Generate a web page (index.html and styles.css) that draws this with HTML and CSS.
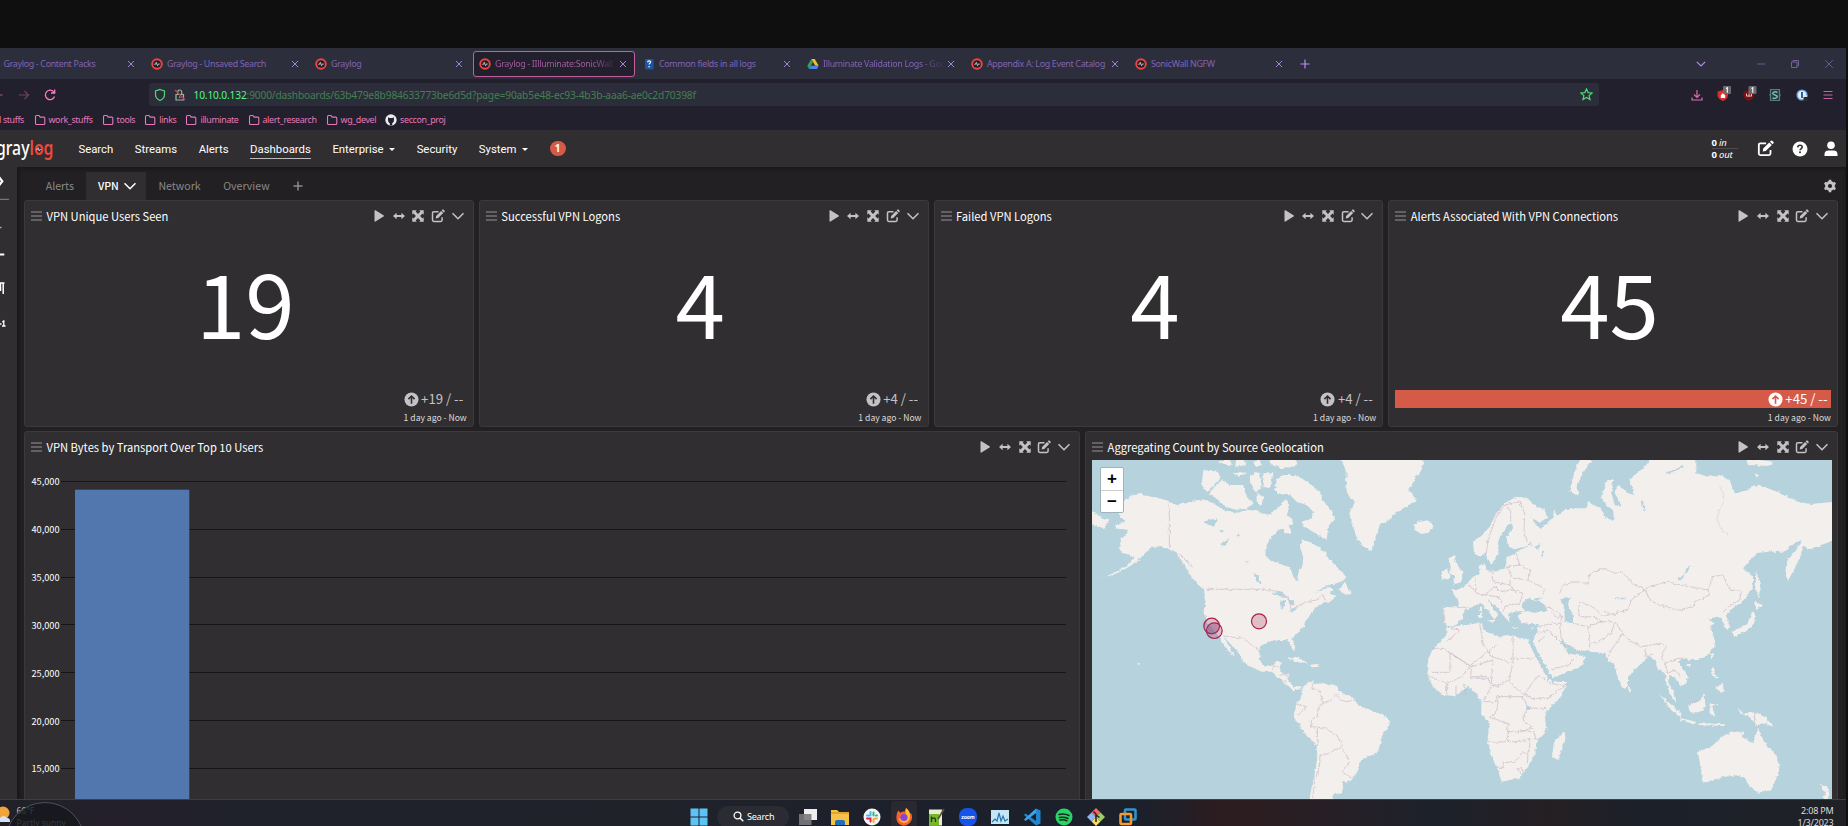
FILE: index.html
```html
<!DOCTYPE html>
<html lang="en">
<head>
<meta charset="utf-8">
<title>Graylog - Illuminate:SonicWall</title>
<link rel="stylesheet" href="styles.css">
</head>
<body>
<svg class="defs" width="0" height="0">
  <symbol id="fav" viewBox="0 0 12 12"><circle cx="6" cy="6" r="4.800" fill="#22202c" stroke="#f0443e" stroke-width="1.900"/><path d="M3.300 6.300h1.200l.8-2 1.200 3.400.8-1.700h1.400" fill="none" stroke="#cfcbd6" stroke-width=".9"/></symbol>
  <symbol id="x" viewBox="0 0 8 8"><path d="M1 1l6 6M7 1L1 7" fill="none" stroke="currentColor"/></symbol>
  <symbol id="folder" viewBox="0 0 12 12"><path d="M1.500 9.500v-7q0-1 1-1H5l1.200 1.600h3.600q1 0 1 1v5.400q0 1-1 1H2.500q-1 0-1-1z" fill="none" stroke="currentColor" stroke-width="1.100"/></symbol>
  <symbol id="grip" viewBox="0 0 11 10"><path d="M0 1h11M0 5h11M0 9h11" stroke="#757376" stroke-width="1.300"/></symbol>
  <symbol id="play" viewBox="0 0 14 14"><path d="M2.500 1.800q0-1 1-.5l8 4.900q1 .7 0 1.400l-8 4.900q-1 .5-1-.5z" fill="currentColor"/></symbol>
  <symbol id="wide" viewBox="0 0 14 14"><path d="M1 7l3.600-3.200v2.200h4.800V3.800L13 7l-3.600 3.200V8H4.600v2.200z" fill="currentColor"/></symbol>
  <symbol id="expand" viewBox="0 0 14 14"><path d="M1.300 5.800V1.300h4.500L4.600 2.500 7 4.900l2.400-2.400-1.200-1.200h4.500v4.500l-1.200-1.200L9.100 7l2.400 2.400 1.200-1.200v4.500H8.200l1.200-1.200L7 9.100l-2.400 2.400 1.200 1.200H1.300V8.200l1.200 1.200L4.900 7 2.500 4.600z" fill="currentColor"/></symbol>
  <symbol id="edit" viewBox="0 0 14 14"><path d="M7.500 2.800H2.800q-1.300 0-1.300 1.300v7q0 1.300 1.300 1.300h7q1.300 0 1.300-1.300V8.300" fill="none" stroke="currentColor" stroke-width="1.500"/><path d="M4.700 9.500l.4-2.500 5-5 2.100 2.100-5 5zM10.700 1.400l.8-.8q.5-.4 1 0l1.100 1.100q.4.500 0 1l-.8.8z" fill="currentColor"/></symbol>
  <symbol id="chev" viewBox="0 0 14 14"><path d="M2 4.700l5 5 5-5" fill="none" stroke="currentColor" stroke-width="1.600" stroke-linecap="round"/></symbol>
  <symbol id="up" viewBox="0 0 16 16"><circle cx="8" cy="8" r="7.500" fill="currentColor"/><path d="M8 12.500V4.500M4.700 7.600L8 4.300l3.300 3.300" fill="none" stroke="var(--hole)" stroke-width="1.700"/></symbol>
</svg>

<div class="top-strip"></div>
<header class="browser">
  <div class="tabs">
    <div class="tab first"><span class="tab-title">Graylog - Content Packs</span><svg class="close"><use href="#x"/></svg></div>
    <div class="tab"><svg class="fav"><use href="#fav"/></svg><span class="tab-title">Graylog - Unsaved Search</span><svg class="close"><use href="#x"/></svg></div>
    <div class="tab"><svg class="fav"><use href="#fav"/></svg><span class="tab-title">Graylog</span><svg class="close"><use href="#x"/></svg></div>
    <div class="tab active"><svg class="fav"><use href="#fav"/></svg><span class="tab-title fade">Graylog - IIlluminate:SonicWall</span><svg class="close"><use href="#x"/></svg></div>
    <div class="tab"><svg class="fav" viewBox="0 0 12 12"><rect x="2" y="1" width="8.500" height="10.500" rx="1" fill="#1f55a0"/><path d="M4.600 4.200q0-1.400 1.500-1.400t1.500 1.300q0 .8-.8 1.200-.7.400-.7 1.300" fill="none" stroke="#fff" stroke-width="1.200"/><circle cx="6.100" cy="8.700" r=".8" fill="#fff"/></svg><span class="tab-title">Common fields in all logs</span><svg class="close"><use href="#x"/></svg></div>
    <div class="tab"><svg class="fav" viewBox="0 0 12 12"><path d="M4.300 1h3.400l4 6.800H8.300z" fill="#f6bd28"/><path d="M4.300 1L.3 7.800 2 11l4-6.900z" fill="#35a25a"/><path d="M3.800 7.800h7.900L10 11H2z" fill="#4c84e8"/></svg><span class="tab-title fade">Illuminate Validation Logs - Goo</span><svg class="close"><use href="#x"/></svg></div>
    <div class="tab"><svg class="fav"><use href="#fav"/></svg><span class="tab-title">Appendix A: Log Event Catalog</span><svg class="close"><use href="#x"/></svg></div>
    <div class="tab"><svg class="fav"><use href="#fav"/></svg><span class="tab-title">SonicWall NGFW</span><svg class="close"><use href="#x"/></svg></div>
    <svg class="newtab" viewBox="0 0 10 10"><path d="M5 .5v9M.5 5h9" stroke="#b98af2" stroke-width="1.200"/></svg>
    <div class="winctl">
      <svg width="12" height="12" viewBox="0 0 12 12"><path d="M1.800 3.800L6 8l4.200-4.200" fill="none" stroke="#b98af2" stroke-width="1.200"/></svg>
      <svg class="min" width="10" height="10" viewBox="0 0 10 10"><path d="M1 5h8" stroke="#6b5a8e"/></svg>
      <svg width="10" height="10" viewBox="0 0 10 10"><path d="M1.500 3h5.500v5.500H1.500zM3 3V1.500h5.500V7H7" fill="none" stroke="#735f99"/></svg>
      <svg width="10" height="10" viewBox="0 0 10 10"><path d="M1.200 1.200l7.600 7.600M8.800 1.200L1.200 8.800" stroke="#6b5a8e"/></svg>
    </div>
  </div>
  <div class="toolbar">
    <svg class="navbtns" width="62" height="16" viewBox="0 0 62 16"><path d="M0 8h2.500" stroke="#8d4f80" stroke-width="1.300"/><path d="M19 8h9M24.500 4l4 4-4 4" fill="none" stroke="#6f4068" stroke-width="1.200"/><path d="M54 5.300A4.700 4.700 0 1 0 54.500 9.500M54.700 2.500V6h-3.700" fill="none" stroke="#ff79c6" stroke-width="1.300"/></svg>
    <div class="url">
      <svg width="12" height="14" viewBox="0 0 12 14"><path d="M6 1.500l4.500 1.400v3.600q0 4-4.500 6-4.500-2-4.500-6V2.900z" fill="none" stroke="#50d976" stroke-width="1.200"/></svg>
      <svg width="12" height="14" viewBox="0 0 12 14"><path d="M2 6.500h7.500v5.500H2zM3.700 6.500V4q0-2 2-2t2 2v2.500M5.700 8.500v1.500" fill="none" stroke="#8fbf98" stroke-width="1.200"/><path d="M1 2l10 10" stroke="#c53b52" stroke-width="1.400"/></svg>
      <span class="addr"><b>10.10.0.132</b>:9000/dashboards/63b479e8b984633773be6d5d?page=90ab5e48-ec93-4b3b-aaa6-ae0c2d70398f</span>
      <svg class="star" width="13" height="13" viewBox="0 0 13 13"><path d="M6.500 1l1.600 3.600 3.900.4-2.900 2.600.9 3.900-3.500-2-3.500 2 .9-3.900L1 5l3.900-.4z" fill="none" stroke="#50d976" stroke-width="1.200"/></svg>
    </div>
    <div class="exts">
      <svg viewBox="0 0 16 18"><path d="M8 4v7M5 8.500l3 3 3-3M3 11.500v2.500h10v-2.500" fill="none" stroke="#e06cb1" stroke-width="1.200"/></svg>
      <svg viewBox="0 0 16 18"><path d="M2.500 5.500L8 4l5 1.500v4Q12.500 13 8 15 3 13 2.500 9.500z" fill="#d3302b"/><path d="M5.800 9h4.400v3H5.800zM6.700 9V7.500h2.600V9" fill="#fff"/><rect x="8" y="0" width="8" height="8" rx="1" fill="#6b6a70"/><path d="M11 2.500l1.300-.8v5" fill="none" stroke="#fff" stroke-width="1.100"/></svg>
      <svg viewBox="0 0 16 18"><path d="M2.500 5.500L8 4l5 1.500v4Q12.500 13 8 15 3 13 2.500 9.500z" fill="#7d0f12"/><path d="M5.500 7.500v2.600h5V7.500M8 7.500v2.600" fill="none" stroke="#ddd" stroke-width=".9"/><rect x="7.500" y="0" width="8" height="8" rx="1" fill="#6b6a70"/><path d="M10.500 2.500l1.300-.8v5" fill="none" stroke="#fff" stroke-width="1.100"/></svg>
      <svg viewBox="0 0 16 18"><path d="M3.500 3.500h9v11h-9zM2 9h1.500M12.500 9H14" fill="#24373f" stroke="#587e80" stroke-width="1.200"/><path d="M10.500 6.500Q8 5 6.300 6.500T8 9t1.700 2.500T5.500 12" fill="none" stroke="#8ab5b0" stroke-width="1.500"/></svg>
      <svg viewBox="0 0 16 18"><circle cx="8" cy="9" r="4.800" fill="#e6f0fb" stroke="#6ea9e8" stroke-width="1.600"/><path d="M8 6v6" stroke="#254a86" stroke-width="1.800"/><path d="M9.500 11h4v4h-4z" fill="#2a2e38"/><path d="M10.300 11V9.500h2.400V11" fill="none" stroke="#ddd"/></svg>
      <svg viewBox="0 0 16 18"><path d="M3.500 5.500h9M3.500 9h9M3.500 12.500h9" stroke="#c463a2" stroke-width="1.200"/></svg>
    </div>
  </div>
  <div class="bookmarks">
    <span class="bm cut">l stuffs</span>
    <span class="bm"><svg><use href="#folder"/></svg>work_stuffs</span>
    <span class="bm"><svg><use href="#folder"/></svg>tools</span>
    <span class="bm"><svg><use href="#folder"/></svg>links</span>
    <span class="bm"><svg><use href="#folder"/></svg>illuminate</span>
    <span class="bm"><svg><use href="#folder"/></svg>alert_research</span>
    <span class="bm"><svg><use href="#folder"/></svg>wg_devel</span>
    <span class="bm"><svg viewBox="0 0 12 12"><circle cx="6" cy="6" r="5.700" fill="#eceaf0"/><path d="M4.800 11.500V9.300Q2.900 8.500 3 5.800L3.200 3.300l1.500.8h2.600l1.500-.8.200 2.500q.1 2.700-1.800 3.500v2.200z" fill="#22202c"/></svg>seccon_proj</span>
  </div>
</header>

<nav class="nav">
  <svg class="logo" width="56" height="26" viewBox="0 0 56 26"><text x="-4" y="18.500" textLength="57.500" lengthAdjust="spacingAndGlyphs" class="lg">gray<tspan class="red">log</tspan></text><path d="M36 13.500h1.300l.9-1.800 1 3.200.7-1.400h.9" fill="none" stroke="#ddd" stroke-width=".8"/></svg>
  <a>Search</a><a>Streams</a><a>Alerts</a><a class="on">Dashboards</a><a>Enterprise<i></i></a><a>Security</a><a>System<i></i></a>
  <span class="badge">1</span>
  <div class="nav-right">
    <div class="io"><span><b>0</b> in</span><span><b>0</b> out</span></div>
    <svg class="ic-edit" width="17" height="17"><use href="#edit"/></svg>
    <svg width="16" height="16" viewBox="0 0 16 16"><circle cx="8" cy="8" r="7.500" fill="#fff"/><path d="M5.700 6.300q.2-2 2.300-2 2.200 0 2.200 1.800 0 1-1.100 1.600-1 .5-1 1.500" fill="none" stroke="#302e30" stroke-width="1.600"/><circle cx="8" cy="11.300" r="1" fill="#302e30"/></svg>
    <svg width="14" height="16" viewBox="0 0 14 16"><circle cx="7" cy="4.300" r="3.800" fill="#fff"/><path d="M.5 15v-1.500q0-4 4-4h5q4 0 4 4V15z" fill="#fff"/></svg>
  </div>
</nav>

<div class="page">
  <aside class="side">
    <svg width="17" height="632" viewBox="0 167 17 632"><path d="M-1 177l3.300 4.200L-1 185.500" fill="none" stroke="#fff" stroke-width="2.200"/><path d="M0 199.300h9" stroke="#8b898b"/><path d="M0 227.500h1.500" stroke="#aaa" stroke-width="1.500"/><path d="M0 254.500h4.300" stroke="#fff" stroke-width="2"/><path d="M0 283h4.500M3.200 283v11M.5 283v8" stroke="#fff" stroke-width="1.500" fill="none"/><path d="M0 324h1.500M2.200 322l1.600-1v5M2 326h3.500" stroke="#fff" stroke-width="1.300" fill="none"/></svg>
  </aside>
  <main class="content">
    <div class="dash-tabs">
      <span class="dt">Alerts</span>
      <span class="dt cur">VPN<svg width="14" height="14"><use href="#chev"/></svg></span>
      <span class="dt net">Network</span>
      <span class="dt">Overview</span>
      <svg class="plus" width="10" height="10" viewBox="0 0 10 10"><path d="M5 .5v9M.5 5h9" stroke="#8c8a8c" stroke-width="1.500"/></svg>
      <svg class="gear" width="14" height="14" viewBox="0 0 14 14"><circle cx="7" cy="7" r="3.500" fill="none" stroke="#c4c2c4" stroke-width="2.800"/><path d="M7 .8v2.400M7 10.800v2.400M1.630 3.900l2.080 1.200M10.290 8.900l2.080 1.200M1.630 10.100l2.080-1.200M10.290 5.100l2.080-1.200" stroke="#c4c2c4" stroke-width="2.600"/></svg>
    </div>
    <div class="grid">
      <section class="panel num">
        <div class="ph"><svg class="grip"><use href="#grip"/></svg><h3>VPN Unique Users Seen</h3><div class="acts"><svg><use href="#play"/></svg><svg><use href="#wide"/></svg><svg><use href="#expand"/></svg><svg><use href="#edit"/></svg><svg><use href="#chev"/></svg></div></div>
        <div class="big">19</div>
        <div class="trend"><svg><use href="#up"/></svg>+19 / --</div><div class="range">1 day ago - Now</div>
      </section>
      <section class="panel num">
        <div class="ph"><svg class="grip"><use href="#grip"/></svg><h3>Successful VPN Logons</h3><div class="acts"><svg><use href="#play"/></svg><svg><use href="#wide"/></svg><svg><use href="#expand"/></svg><svg><use href="#edit"/></svg><svg><use href="#chev"/></svg></div></div>
        <div class="big">4</div>
        <div class="trend"><svg><use href="#up"/></svg>+4 / --</div><div class="range">1 day ago - Now</div>
      </section>
      <section class="panel num">
        <div class="ph"><svg class="grip"><use href="#grip"/></svg><h3>Failed VPN Logons</h3><div class="acts"><svg><use href="#play"/></svg><svg><use href="#wide"/></svg><svg><use href="#expand"/></svg><svg><use href="#edit"/></svg><svg><use href="#chev"/></svg></div></div>
        <div class="big">4</div>
        <div class="trend"><svg><use href="#up"/></svg>+4 / --</div><div class="range">1 day ago - Now</div>
      </section>
      <section class="panel num">
        <div class="ph"><svg class="grip"><use href="#grip"/></svg><h3>Alerts Associated With VPN Connections</h3><div class="acts"><svg><use href="#play"/></svg><svg><use href="#wide"/></svg><svg><use href="#expand"/></svg><svg><use href="#edit"/></svg><svg><use href="#chev"/></svg></div></div>
        <div class="big">45</div>
        <div class="trend bad"><svg><use href="#up"/></svg>+45 / --</div><div class="range">1 day ago - Now</div>
      </section>
      <section class="panel chart">
        <div class="ph"><svg class="grip"><use href="#grip"/></svg><h3>VPN Bytes by Transport Over Top 10 Users</h3><div class="acts"><svg><use href="#play"/></svg><svg><use href="#wide"/></svg><svg><use href="#expand"/></svg><svg><use href="#edit"/></svg><svg><use href="#chev"/></svg></div></div>
        <svg class="plot" width="1042" height="339" viewBox="31 460 1042 339">
          <path d="M61 481.500H1066M61 529.500H1066M61 577.500H1066M61 624.500H1066M61 672.500H1066M61 720.500H1066M61 768.500H1066" stroke="#151416"/>
          <rect x="75" y="489.700" width="114.300" height="310" fill="#5277af"/>
          <g class="axis"><text x="59.500" y="484.600">45,000</text><text x="59.500" y="532.600">40,000</text><text x="59.500" y="580.600">35,000</text><text x="59.500" y="628.600">30,000</text><text x="59.500" y="676.600">25,000</text><text x="59.500" y="724.600">20,000</text><text x="59.500" y="772">15,000</text></g>
        </svg>
      </section>
      <section class="panel mapp">
        <div class="ph"><svg class="grip"><use href="#grip"/></svg><h3>Aggregating Count by Source Geolocation</h3><div class="acts"><svg><use href="#play"/></svg><svg><use href="#wide"/></svg><svg><use href="#expand"/></svg><svg><use href="#edit"/></svg><svg><use href="#chev"/></svg></div></div>
        <div class="map">
          <svg width="740" height="339" viewBox="36 90 2220 1017">
            <defs><filter id="coast" x="-5%" y="-5%" width="110%" height="110%"><feTurbulence type="fractalNoise" baseFrequency=".09" numOctaves="4" seed="4"/><feDisplacementMap in="SourceGraphic" scale="11" xChannelSelector="R" yChannelSelector="G"/></filter></defs>
            <g filter="url(#coast)">
            <g fill="#f3efec">
              <path d="M130 215L150 200 172 188 190 195 215 200 250 208 268 215 290 225 310 218 340 212 375 208 400 220 430 240 470 248 500 240 530 240 548 250 570 255 590 235 605 225 612 210 625 212 628 235 620 255 635 265 640 280 618 290 595 300 575 320 560 345 556 375 570 390 600 402 630 412 640 440 652 452 655 425 668 405 670 375 660 355 665 330 690 335 715 350 735 365 745 385 765 405 785 425 798 440 795 450 770 460 745 465 720 480 705 492 730 478 755 472 760 480 745 490 770 498 745 520 735 515 705 535 690 555 675 575 672 590 650 610 635 622 645 650 642 665 632 645 622 630 600 630 570 633 545 645 538 665 540 690 555 710 580 705 590 692 605 695 598 715 605 730 625 732 622 750 640 770 662 768 665 778 640 780 620 765 600 745 575 725 545 725 515 712 490 695 485 680 460 650 430 620 445 645 465 680 455 675 440 655 425 635 410 610 395 595 383 580 374 550 375 515 372 480 350 460 335 440 310 400 290 370 265 357 240 350 215 350 195 370 170 395 140 415 100 435 60 445 100 430 140 408 160 385 150 375 130 370 115 355 125 335 120 325 140 315 145 300 110 295 105 285 135 275 115 250Z"/>
              <path d="M665 780L675 765 690 755 700 752 705 765 720 758 745 762 765 765 780 785 800 795 820 800 830 820 850 832 890 848 920 858 930 875 925 895 905 915 900 945 890 970 860 980 840 995 835 1020 815 1050 800 1058 785 1055 790 1075 785 1090 760 1092 758 1115 688 1115 695 1070 705 1030 712 980 710 945 690 925 670 905 655 880 640 860 645 840 650 820 662 805Z"/>
              <path d="M782 80L800 130 797 170 808 200 825 215 808 250 820 290 830 325 850 350 875 360 885 325 900 285 930 270 945 248 990 225 1010 210 985 180 1010 140 1025 120 1032 80Z"/>
              <path d="M1000 285L1015 275 1050 270 1060 290 1045 308 1025 312 1010 305ZM370 120L415 125 420 145 400 170 380 185 365 165ZM425 150L450 165 490 165 500 200 520 220 505 235 470 240 430 228 410 205 390 195 395 180ZM415 95L450 85 455 105 430 105ZM460 130L505 125 480 140ZM510 135L540 125 545 175 525 185 510 160ZM550 130L580 130 570 175 550 170ZM590 150L610 135 650 135 680 155 720 185 730 215 755 240 762 265 745 290 740 330 715 315 690 300 670 290 665 275 695 265 700 245 680 225 650 215 625 190 600 195 585 180ZM560 80L650 80 650 108 600 115 570 100ZM470 80L490 80 500 105 465 110ZM520 95L540 90 545 108 525 108ZM530 190L550 200 545 225 530 215ZM610 290L625 285 635 310 615 310ZM775 480L795 455 805 475 815 490 800 497ZM622 685L655 683 685 700 660 698ZM690 705L710 702 718 710 695 712ZM30 235L60 262 88 270 70 298 50 290 30 280ZM1105 385L1125 375 1122 390 1135 405 1150 430 1145 455 1118 465 1125 440 1110 430 1112 410ZM1085 425L1105 415 1108 445 1085 452ZM172 698l8 2-2 6z"/>
            </g>
            <g transform="translate(1104 0)" fill="#f3efec">
              <path d="M-14 530L35 533 30 510 10 480 28 480 55 465 75 440 95 432 92 405 112 398 115 420 140 425 170 415 175 400 175 385 200 370 215 360 245 348 230 350 200 358 180 350 175 320 195 290 190 280 175 290 155 320 150 340 152 365 145 385 130 405 118 390 115 370 95 380 78 370 75 335 100 318 125 290 145 250 170 220 205 200 240 205 250 220 290 240 298 265 275 278 250 262 262 285 280 295 300 275 315 265 318 235 325 258 350 240 385 235 415 235 420 215 440 225 460 235 470 265 498 270 495 240 475 225 460 200 465 185 478 150 495 150 490 190 500 225 520 230 515 215 500 190 510 165 540 190 560 195 545 150 590 110 615 80 745 80 745 130 780 140 815 135 845 150 860 190 900 180 920 165 960 175 1010 195 1050 215 1090 222 1160 215 1160 330 1120 345 1085 358 1065 350 1055 385 1035 425 1020 455 1012 430 1015 395 1045 360 1060 330 1030 345 1010 365 960 365 925 370 885 415 915 440 915 470 890 510 860 530 832 555 845 580 840 600 828 590 825 565 805 560 780 570 800 580 785 590 800 630 800 650 780 675 750 690 725 690 705 685 690 695 720 740 715 760 697 770 685 745 665 735 660 755 680 790 685 820 665 790 655 760 650 725 630 720 620 690 600 680 580 700 540 740 540 765 528 777 510 745 497 700 480 690 470 670 425 665 395 660 365 655 338 632 360 670 412 680 405 705 375 720 315 745 300 720 260 655 250 640 270 600 270 583 220 580 210 560 220 545 255 540 200 545 180 550 185 578 165 555 150 535 120 510 150 555 140 570 115 535 95 520 75 530 50 540 45 565 15 590 -10 585Z"/>
              <path d="M-5 590L5 595 40 585 100 578 108 600 150 620 175 615 240 628 262 680 300 725 312 755 358 755 340 800 290 850 295 900 265 935 262 970 240 1010 215 1045 160 1055 150 1020 130 980 118 930 125 880 100 850 100 815 85 790 60 770 20 798 -15 795 -45 770 -62 735 -60 690 -50 665 -5 615Z"/>
              <path d="M318 935L350 905 352 930 330 990 312 980ZM395 85L432 90 405 130 385 170 395 198 365 185 375 140ZM538 768L550 780 545 790ZM850 605L880 592 900 580 912 545 922 548 918 580 900 600 860 620ZM918 515L945 525 925 540ZM925 425L937 470 932 505 922 470ZM788 670l10 0-4 16zM717 702l12 0-4 10zM790 712L802 715 800 735 815 745 805 745 790 735ZM805 770L825 760 827 790 810 785ZM720 825L750 815 770 790 772 835 745 850 725 845ZM633 792L660 815 700 850 698 865 670 840ZM700 865L745 875 740 882 700 872ZM752 880l80 3-4 5-76-3zM785 822L815 822 793 830 802 860 785 850ZM868 835L890 850 910 845 950 860 978 892 955 882 925 885 905 860 880 852ZM750 965L790 950 820 920 855 905 890 905 880 920 915 940 930 895 950 940 985 975 995 1010 985 1045 970 1080 930 1088 905 1070 890 1045 870 1035 830 1040 765 1058 760 1030ZM1118 1060L1145 1080 1140 1107 1125 1107 1132 1090ZM893 85L975 95 970 108 900 105ZM920 130l10 5-4 10zM115 570l25 0-5 8zM93 548l8-2 0 18-8 0zM96 533h5v10h-5zM195 590l20 2-18 2zM247 594l10-3-4 8z"/>
            </g>
            <g fill="#b5d2dd" stroke="none">
              <path d="M570 490L600 485 625 500 605 500ZM600 512L617 510 608 540 602 538ZM620 505L645 515 640 530 630 520ZM628 542L655 530 638 548ZM520 430L530 455 545 465 538 440ZM368 275L412 265 400 292ZM420 345L447 325 440 347ZM470 315l8-5-4 12zM500 392l8 4-8 6zM420 300l14 2-8 6z"/>
              <path d="M1440 505L1472 500 1464 525 1479 555 1479 580 1454 575 1454 540ZM1322 525L1342 505 1389 520 1405 542 1364 548 1335 542ZM1362 508l25-8-14 14zM1340 345l14-8 0 12zM1362 352l18-10-4 14zM1338 828l14 0 0 12-14 0zM1605 503l34 0-10 5-24-1z"/>
            </g>
            <path d="M1352 634Q1375 685 1412 748M1445 634Q1465 660 1500 668" fill="none" stroke="#b5d2dd" stroke-width="12"/>
            <path d="M1795 450Q1815 440 1829 408M1684 210l10 30M1390 360l-4 20M1760 130l50-20" fill="none" stroke="#b5d2dd" stroke-width="5"/>
            <g fill="none" stroke="#cdbcc9" stroke-width="2.200" stroke-linejoin="round">
              <path d="M268 215V355L300 375 338 412M380 478H555L600 485 630 510 632 540 680 515 710 510 728 492 735 510M430 618L490 625 515 645 538 662M575 722l10-18 12 10M600 735l25 0M610 750l12 10"/>
              <path d="M700 755L695 775 720 785 728 820 715 830 712 860 690 870 695 890 735 895 770 915 787 945 780 955 760 960 750 970 720 975 718 1010 705 1050 698 1107M728 820L755 810 770 790 780 810 800 815 825 810M650 822L680 830 655 855M712 895L712 945M787 955L810 995 795 1015 785 1025 815 1045"/>
              <path d="M1094 540v45M1060 655h30l80 52 80-62M1110 667v60h-60M1040 735l60 25 45-20 25-32M1100 762v30M1128 765v30M1150 760l10 35M1170 740h50M1110 595l28 5-40 38"/>
            </g>
            <g transform="translate(1104 0)" fill="none" stroke="#cdbcc9" stroke-width="2.200" stroke-linejoin="round">
              <path d="M95 580L105 640 130 680 195 700V620M185 685H270M195 700L182 750 145 770 130 760 135 690 70 710 0 665M70 710L68 745 120 745 130 770 105 815H150L145 800 225 800 245 770 270 735 310 760 350 768 300 805H250L195 770 182 750M150 815L145 850 125 862M225 800L238 830 225 870 255 895 265 930M125 862L180 880 178 935 118 937M178 935L220 935 245 925 245 965 220 970 200 995 168 995 165 1012 145 1012M240 970L238 1000M215 900L250 905M178 905h45l30-15M240 835h55M50 760v35M210 1018l10-5 4 8-8 8z"/>
              <path d="M115 370L120 330 145 260 170 225 215 215 230 250 228 300 238 335M188 275V240L170 225M132 425L135 455 185 465 190 430 175 410 215 405 245 420 240 450 290 475 285 495M80 440L85 490 110 495 140 470 155 485 195 480 225 490 215 520 170 530 165 545M110 495L150 500 165 520M195 445L240 450M185 465L205 490M35 532L60 532M60 465L80 480M205 370L215 405"/>
              <path d="M290 525L320 540 340 555 330 565 310 545M270 590L310 580 335 580 340 630M270 610L300 600 360 660M270 635L290 620M310 718L360 705 385 680M340 555L340 580M375 580L420 590 425 655M420 590L460 575 500 575 490 610 445 640 430 640M500 575L525 610 490 660 480 680M335 490L345 465 380 455 420 460 425 430 470 415 500 430 520 425 560 465 590 478 550 510 540 540 500 550 465 560 440 535 400 515 390 530 395 560M400 560L440 560 465 580M590 478L620 465 660 455 720 470 780 480 785 495 740 515 735 530 695 540 650 530 610 515 590 478M780 480L795 440 825 435 845 480 880 485 875 510 850 525 820 550M540 630L580 650 640 640 655 650 640 680 650 700 690 685 710 685M540 630L525 610M590 655L595 680 615 670M650 700L660 730 680 720 700 740M470 545l30 10 10-15M835 572h10M730 820l25-10 10-12M920 845v38"/>
              <path d="M815 170Q840 200 815 240T840 315" stroke="#cbd9e0"/>
            </g>
            </g>
            <g fill="#a8224f" fill-opacity=".24" stroke="#a8224f" stroke-width="3.600"><circle cx="395" cy="588" r="23.500"/><circle cx="403" cy="602" r="23.500"/><circle cx="537" cy="574" r="22.500"/></g>
            <circle cx="399" cy="595" r="16" fill="#6a5fa0" opacity=".25"/>
          </svg>
          <div class="zoom"><span>+</span><span>−</span></div>
        </div>
      </section>
    </div>
  </main>
</div>

<footer class="taskbar">
  <div class="weather"><svg width="12" height="20" viewBox="0 0 12 20"><circle cx="3" cy="8" r="6.500" fill="#f2a33a"/><path d="M0 13q4-4 7 0 3 0 3 3v1H0z" fill="#d8e2f7"/></svg><div class="wt"><span>66°F</span><span>Partly sunny</span></div></div>
  <div class="apps">
    <svg class="app" viewBox="0 0 18 18"><path d="M.5.5h8v8h-8zM9.500.5h8v8h-8zM.5 9.500h8v8h-8zM9.500 9.500h8v8h-8z" fill="#5dc3f5"/></svg>
    <div class="search"><svg width="11" height="11" viewBox="0 0 11 11"><circle cx="4.500" cy="4.500" r="3.400" fill="none" stroke="#fff" stroke-width="1.300"/><path d="M7 7l3.300 3.300" stroke="#fff" stroke-width="1.500"/></svg>Search</div>
    <svg class="app" viewBox="0 0 18 18"><path d="M5 1h13v11H5z" fill="#eee"/><path d="M0 6h12.500v11H0z" fill="#7a7a7c" opacity=".9"/></svg>
    <svg class="app" viewBox="0 0 18 18"><path d="M0 2h6l2 2h10v13H0z" fill="#f5c248"/><path d="M0 4h18v2H0z" fill="#e3a52e"/><path d="M4 17v-3q0-2 2-2h6q2 0 2 2v3z" fill="#1f6fbe"/></svg>
    <svg class="app" viewBox="0 0 18 18"><circle cx="9" cy="9" r="8.500" fill="#f6f3f6"/><g fill="none" stroke-width="2" stroke-linecap="round"><path d="M7.500 4v3.500M4 7.500h2" stroke="#36c5f0"/><path d="M10.500 4.500v3M14 7.500h-1" stroke="#2eb67d"/><path d="M10.500 14v-3M12 10.500h2" stroke="#ecb22e"/><path d="M7.500 13.500v-3H4" stroke="#e01e5a"/></g></svg>
    <div class="fx"><svg class="app" viewBox="0 0 18 18"><path d="M2 5q-2 9 3 11.500Q9 19 13.500 16 18.500 12 16.500 6l-1.500-1Q14 2 11 0q0 2-1 3.500Q6 3 5.500 5L3.500 2.500z" fill="#f9622d"/><path d="M11 0q4 3 4 8 0 6-6 7-5-1-5-5 3 2 5 0l2-5Q9.500 3 11 0z" fill="#fdbf2d"/><circle cx="9" cy="9.500" r="3.600" fill="#8a45d8"/></svg></div>
    <svg class="app" viewBox="0 0 18 18"><path d="M2 1.500h13v16H2z" fill="#e6efcf"/><path d="M2 6h10v11.500H2z" fill="#76b82a"/><path d="M4.500 14V8.500M4.500 10.500q4-1 4 1V14" fill="none" stroke="#233b10" stroke-width="1.300"/><path d="M17 1l-6 10" stroke="#61503d" stroke-width="1.700"/></svg>
    <svg class="app" viewBox="0 0 18 18"><rect width="18" height="18" rx="8" fill="#1554e8"/><text x="9" y="11" class="zm">zoom</text></svg>
    <svg class="app" viewBox="0 0 18 18"><path d="M0 2h18v14H0z" fill="#c5e5f5"/><path d="M1 14l3-3 2 2 2-8 2 8 2-5 2 5 3-2" fill="none" stroke="#2577b5" stroke-width="1.200"/></svg>
    <svg class="app" viewBox="0 0 18 18"><path d="M13 .5l4.500 2v13L13 17.500 1 7l1.500-1.500L13 13z" fill="#1f86cf"/><path d="M13 .5V5L2.500 13 1 11.500z" fill="#3aa5ee"/></svg>
    <svg class="app" viewBox="0 0 18 18"><circle cx="9" cy="9" r="8.500" fill="#2bd267"/><path d="M4 6.500q5-1.500 10 1M4.500 9.500q4.500-1 8.500 1M5 12q4-1 7 .8" fill="none" stroke="#17271c" stroke-width="1.500" stroke-linecap="round"/></svg>
    <svg class="app" viewBox="0 0 18 18"><path d="M9 0l4.500 4.500L9 9 4.500 4.500z" fill="#ee6a60"/><path d="M4.500 4.500L9 9l-4.500 4.500L0 9z" fill="#8fb5f5"/><path d="M13.500 4.500L18 9l-4.500 4.500L9 9z" fill="#9cd067"/><path d="M9 9l4.500 4.500L9 18l-4.500-4.500z" fill="#f5dc6a"/><path d="M6.500 3.500L9 6v8M9 7l3.500 2.500" fill="none" stroke="#2b211e" stroke-width="1.500"/></svg>
    <svg class="app" viewBox="0 0 18 18"><rect x="6" y="1.500" width="10.500" height="10" rx="1" fill="none" stroke="#3094cf" stroke-width="2.600"/><rect x="1.500" y="6" width="10.500" height="10" rx="1" fill="none" stroke="#f29a2e" stroke-width="2.600"/></svg>
  </div>
  <div class="clock"><span>2:08 PM</span><span>1/3/2023</span></div>
</footer>
</body>
</html>
```
FILE: styles.css
```css
* { box-sizing: border-box; }
body { margin: 0; width: 1848px; height: 826px; overflow: hidden; background: #0f0f0f; display: flex; flex-direction: column; font-family: "Noto Sans CJK SC", "Open Sans", sans-serif; color: #fff; }
svg { display: block; flex: none; }
.defs { position: absolute; }
.top-strip { height: 48px; background: #0f0f0f; flex: none; }
.browser, .nav, .page, .taskbar { width: 1846px; flex: none; }
.browser { height: 82px; background: #22202c; font-family: "Noto Sans", "Open Sans", sans-serif; }

.tabs { height: 31px; background: #2d2e3b; display: flex; align-items: center; padding-top: 1px; }
.tab { width: 161.500px; height: 26px; margin-right: 2.500px; display: flex; align-items: center; padding: 0 6.500px 0 4.500px; color: #8163b3; font-size: 8.900px; flex: none; border: 1px solid transparent; border-radius: 3px; }
.tab.first { width: 142.500px; padding-left: 2.500px; }
.tab .fav { width: 12px; height: 14px; margin-right: 4.500px; }
.tab-title { flex: 1; min-width: 0; white-space: nowrap; line-height: 14px; letter-spacing: -.32px; }
.tab-title.fade { overflow: hidden; -webkit-mask-image: linear-gradient(90deg, #000 80%, transparent); }
.tab .close { width: 8px; height: 8px; color: #a182d6; margin-left: 2px; }
.tab.active { border-color: #c2609d; color: #a05a9e; background: #22202c; }
.newtab { width: 10px; height: 10px; margin-left: 7px; }
.winctl { margin-left: auto; display: flex; align-items: center; padding-right: 12px; gap: 24px; }
.winctl .min { margin-left: 25px; }

.toolbar { height: 31px; display: flex; align-items: center; }
.navbtns { margin-right: 86.500px; }
.url { width: 1450.500px; height: 23px; background: #2c2d3a; border-radius: 3px; display: flex; align-items: center; padding: 0 6px 0 5.500px; gap: 8px; }
.addr { color: #438050; font-size: 10.200px; white-space: nowrap; line-height: 16px; letter-spacing: -.16px; margin-left: -.5px; padding-top: 1px; }
.addr b { font-weight: 400; color: #50fa7b; }
.star { margin-left: auto; }
.exts { display: flex; gap: 10.300px; margin-left: auto; padding-right: 10px; }
.exts svg { width: 16px; height: 18px; }
.bookmarks { height: 20px; display: flex; align-items: center; gap: 9px; color: #e679b9; font-size: 8.900px; letter-spacing: -.36px; }
.bm { display: flex; align-items: center; gap: 3px; white-space: nowrap; line-height: 14px; }
.bm svg { width: 12px; height: 12px; }
.bm.cut { width: 25.500px; margin-left: -1px; }

.nav { height: 37px; background: #302e30; display: flex; align-items: center; padding-right: 8px; }
.logo { margin-right: 22.400px; }
.lg { font: 500 20px "Noto Sans", "Open Sans", sans-serif; fill: #fff; }
.lg .red { fill: #ee483f; font-weight: 600; }
.nav a { margin: 2px 21.600px 0 0; color: #fff; display: flex; align-items: center; font: 400 11.350px/17px Roboto, sans-serif; border-bottom: 1px solid transparent; }
.nav a.on { border-color: #bbb; }
.nav i { border: 3px solid transparent; border-top-color: #fff; border-bottom: 0; margin-left: 5.500px; }
.badge { width: 16px; height: 15px; border-radius: 8px; background: #d65a48; font: 700 10px/15px "Noto Sans", sans-serif; text-align: center; }
.nav-right { margin-left: auto; display: flex; align-items: center; }
.io { width: 27px; font: italic 9.500px/11px "Noto Sans", sans-serif; display: flex; flex-direction: column; margin-right: 19.500px; letter-spacing: -.2px; white-space: nowrap; padding-left: 1px; }
.io span:first-child { border-bottom: 1px solid #4d4b4d; }
.io b { font-style: normal; }
.ic-edit { margin-right: 18px; }
.nav-right svg:nth-child(3) { margin-right: 16px; }

.page { height: 632px; display: flex; background: #222022; overflow: hidden; }
.side { width: 17px; background: #302e30; box-shadow: 0 0 5px #111; flex: none; }
.content { flex: 1; padding: 0 7px 0 7px; box-shadow: inset 0 2px 3px #19181a; }
.dash-tabs { height: 33px; padding-top: 5px; display: flex; align-items: center; font-size: 10.600px; color: #8a888a; }
.dt { line-height: 28px; margin-left: 22.500px; }
.dt:first-child { margin-left: 21.700px; }
.dt.cur { width: 59.700px; background: #302e30; color: #fff; display: flex; align-items: center; gap: 4px; padding-left: 11.500px; margin: 0 0 0 12.500px; font-weight: 500; }
.dt.net { margin-left: 12.300px; }
.plus { margin-left: 23.500px; }
.gear { margin-left: auto; margin-right: 2.500px; }
.grid { display: grid; grid-template-columns: repeat(12, 1fr); grid-template-rows: 227px 390px; gap: 4px 5px; width: 1814px; }
.panel { grid-column: span 3; background: #302e30; border: 1px solid #3b393b; border-radius: 3px; padding: 5px 6px 0; display: flex; flex-direction: column; min-width: 0; }
.chart { grid-column: span 7; }
.mapp { grid-column: span 5; }
.ph { height: 19px; display: flex; align-items: center; flex: none; }
.grip { width: 11px; height: 10px; margin-right: 4.500px; }
.ph h3 { margin: 0; font-size: 11.200px; font-weight: 400; line-height: 16px; white-space: nowrap; }
.acts { margin-left: auto; display: flex; gap: 5.700px; color: #c4c2c4; padding-right: 2px; }
.acts svg { width: 14px; height: 14px; }
.big { height: 165px; font-size: 89px; line-height: 151px; text-align: center; padding-right: 7px; }
.trend { --hole: #302e30; height: 18px; color: #c4c2c4; display: flex; align-items: center; justify-content: flex-end; gap: 2.500px; font-size: 13.200px; line-height: 18px; padding-right: 3.500px; }
.trend svg { width: 15px; height: 15px; }
.trend.bad { --hole: #d65a48; background: #d65a48; color: #fff; }
.range { font-size: 8.600px; line-height: 18px; text-align: right; color: #ddd; }
.plot { margin-top: 4px; }
.axis { font-size: 9.200px; fill: #fff; text-anchor: end; }
.map { position: relative; margin-top: 4px; width: 740px; height: 339px; background: #b5d2dd; flex: none; overflow: hidden; }
.zoom { position: absolute; left: 8px; top: 7px; width: 24px; height: 46px; background: #fff; border: 1px solid #9fb3bb; border-radius: 2px; color: #000; display: flex; flex-direction: column; font: 700 17px/22px "Liberation Sans", sans-serif; text-align: center; }
.zoom span:first-child { border-bottom: 1px solid #ccc; }

.taskbar { height: 27px; border-top: 1px solid #3e3f45; background: linear-gradient(90deg, #202228 0, #241f2b 6%, #1f222b 14%, #20222a 36%, #1c202b 50%, #1c202b 62%, #2b1c20 66%, #2b1d20 68%, #1d212b 78%, #251f22 84%, #1b202a 89%, #202126); display: flex; position: relative; overflow: hidden; font-family: "Noto Sans", sans-serif; }
.weather { width: 689.500px; display: flex; flex: none; }
.weather::after { content: ""; position: absolute; left: 4.500px; top: 2px; width: 78px; height: 78px; border-radius: 50%; border: 1.500px solid #4b5158; background: #15181bcc; }
.wt { display: flex; flex-direction: column; font-size: 8.500px; line-height: 11.500px; margin: 5px 0 0 4.500px; color: #b5b5b5; }
.weather > svg { margin-top: 5px; }
.apps { display: flex; align-items: center; padding-top: 6px; height: 27px; }
.app { width: 18px; height: 18px; margin-right: 14px; }
.apps > .app:first-child { margin-right: 9px; }
.search { width: 72px; height: 22px; background: #2a2b33; border-radius: 11px; margin-right: 10px; display: flex; align-items: center; gap: 3.500px; padding-left: 16px; font-size: 9.100px; letter-spacing: -.25px; }
.fx { width: 26px; height: 32px; margin: 0 10px 0 -4px; background: #2a2931; border-radius: 3px; display: flex; align-items: center; justify-content: center; flex: none; }
.fx .app { margin: 0; }
.zm { font: 700 5px "Open Sans", sans-serif; fill: #fff; text-anchor: middle; }
.clock { margin-left: auto; padding: 5px 12.500px 0 0; font-size: 9px; line-height: 11.500px; text-align: right; display: flex; flex-direction: column; color: #ddd; letter-spacing: -.2px; white-space: nowrap; }
```
